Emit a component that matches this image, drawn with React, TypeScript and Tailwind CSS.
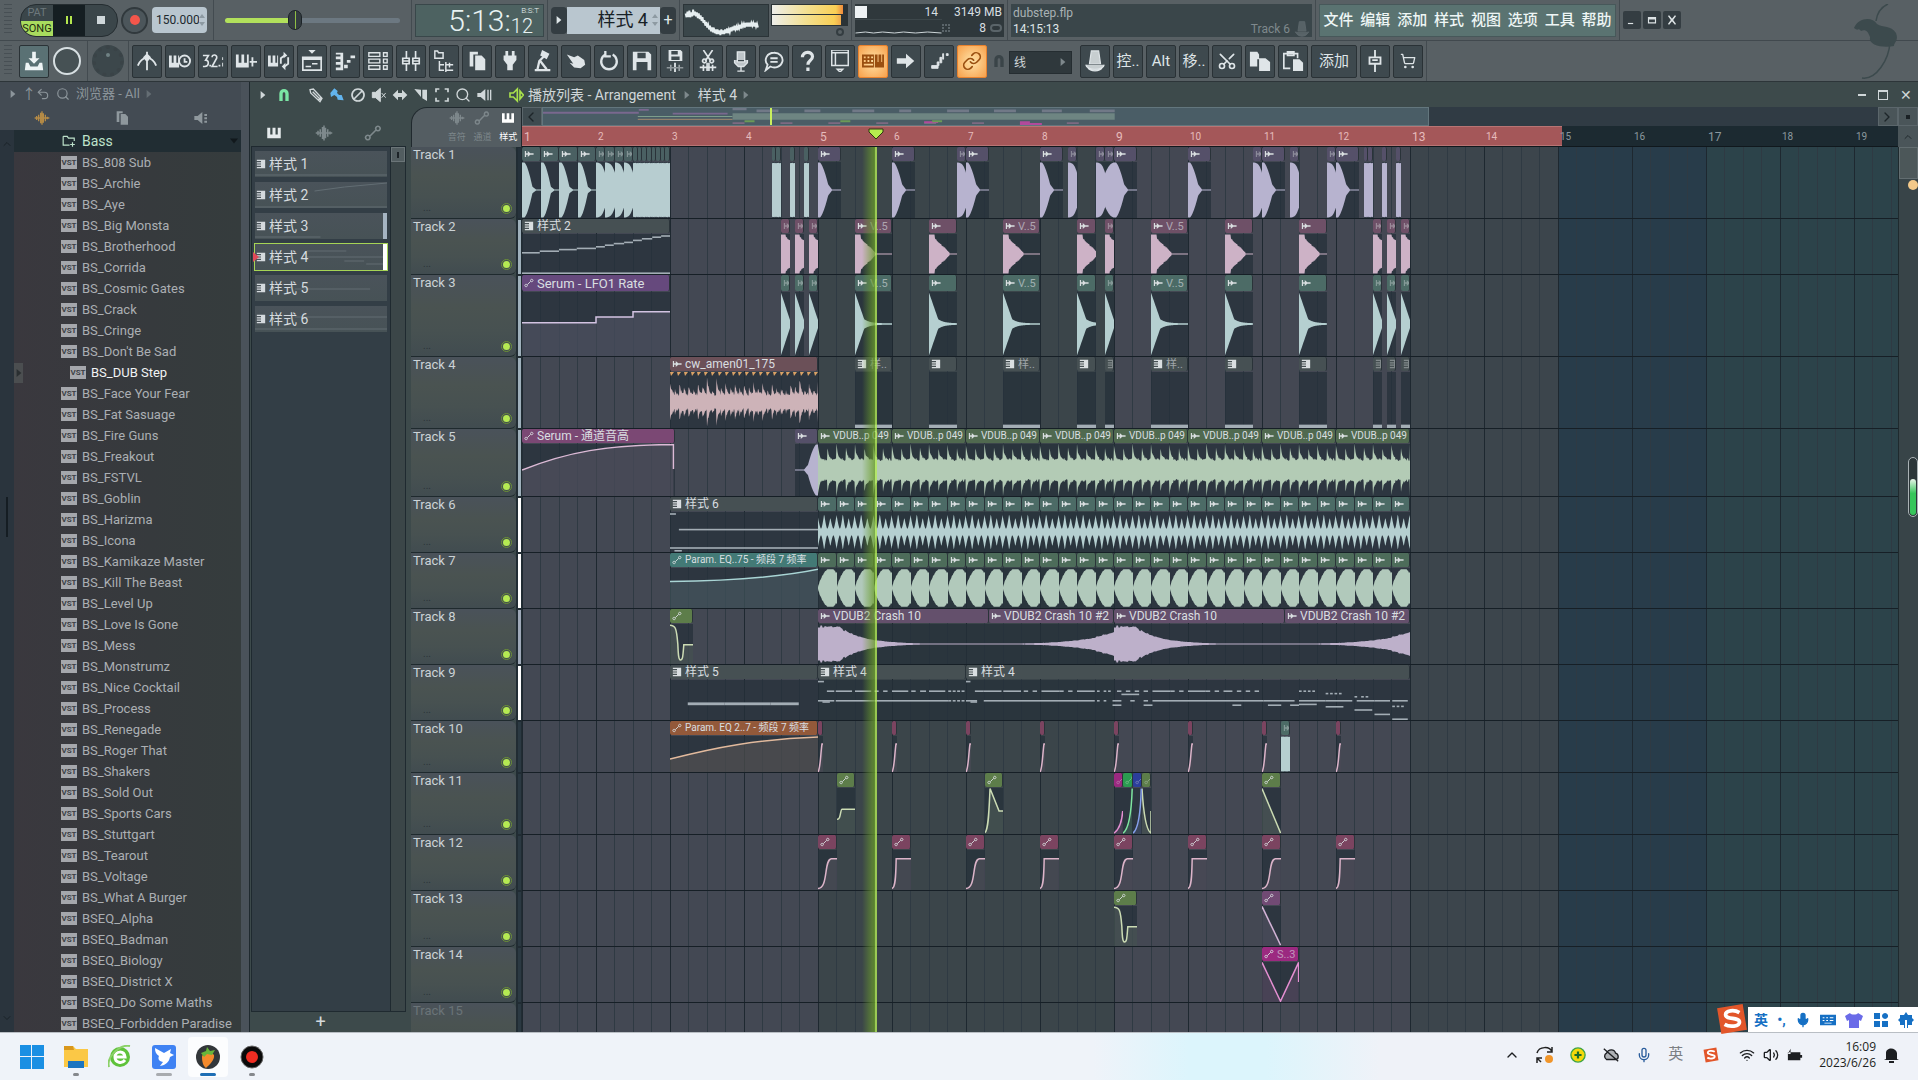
import type { ReactNode } from "react";
import { Search, Undo2, Mic, Wifi, Volume2, ChevronUp, ChevronLeft, ChevronRight, ShoppingCart, Link, Scissors } from "lucide-react";

const BEAT = 18.5;

/* ---------- glyphs ---------- */

const glyphs: Record<string, ReactNode> = {
  piano: <path d="M3 5h4v9h3V5h4v9h3V5h4v14H3z" fill="currentColor" />,
  pattern: <path d="M2 2h20v20H2v-3h10v-3H2v-3h10v-2H2V8h10V5H2z" fill="currentColor" />,
  audio: <path d="M2 5h3v5h4V5l6 5h8v4h-8l-6 5v-5H5v5H2z" fill="currentColor" />,
  auto: <path d="M8 16l8-8M5 15a3 3 0 1 0 .1 0zM18.500 3a3 3 0 1 0 .1 0z" fill="none" stroke="currentColor" strokeWidth="2.200" />,
  wave: <path d="M1 12h22M4 9v6M7 7v10M10 4v16M12 2v20M14 5v14M17 7v10M20 10v4" stroke="currentColor" strokeWidth="2" fill="none" />,
  copy: <path d="M4 2h9v3H8v13H4zM10 6h7l4 4v12H10z" fill="currentColor" />,
  speaker: <path d="M2 9h5l7-6v18l-7-6H2zM17 6h4v3h-4zM17 11h4v3h-4zM17 16h4v3h-4z" fill="currentColor" />,
  live: <path d="M3 9h5l6-6v18l-6-6H3z M18 6l5 6-5 6z" fill="none" stroke="currentColor" strokeWidth="2.500" />,
  render: <path d="M10 2h4v7h4l-6 6-6-6h4zM3 14h3l2 4h8l2-4h3l1 8H2z" fill="currentColor" />,
  metro: <path d="M12 2v20M2 17c2-5 5-8 10-9 5 1 8 4 10 9M9 8l3-3 3 3-3 4z" stroke="currentColor" strokeWidth="2" fill="none" />,
  pianoClock: (
    <>
      <path d="M0 6h3v8h2V6h3v8h2V6h1v13H0z" fill="currentColor" />
      <circle cx="17" cy="12" r="6" fill="none" stroke="currentColor" strokeWidth="2" />
      <path d="M17 9v4h3" stroke="currentColor" strokeWidth="2" fill="none" />
    </>
  ),
  pianoPlus: <path d="M1 5h3v9h3V5h3v9h3V5h2v14H1zM18 8h2v4h4v2h-4v4h-2v-4h-2v-2h2z" fill="currentColor" />,
  pianoLoop: (
    <>
      <path d="M0 6h3v8h2V6h3v8h2V6h1v12H0z" fill="currentColor" />
      <path d="M14 15V9l4-3M22 8v7l-4 3" stroke="currentColor" strokeWidth="2" fill="none" />
      <path d="M17 2l4 4-4 3zM19 14v8l-4-4z" fill="currentColor" />
    </>
  ),
  playlist: (
    <>
      <path d="M8 0h8l-4 4zM1 7h22v4H1z" fill="currentColor" />
      <path d="M2 9v13h20V9M5 18h6M12 15h6" fill="none" stroke="currentColor" strokeWidth="1.800" />
    </>
  ),
  roll: <path d="M2 3h8v19H2v-3h5v-3H2v-3h5v-3H2V7h5V5H2zM11 16h4v4h-4zM14 11h4v3h-4zM18 6h5v3h-5z" fill="currentColor" />,
  rack: <path d="M2 3h12v4H2zM2 10h12v4H2zM2 17h12v4H2zM18 3h4v4h-4zM18 10h4v4h-4zM18 17h4v4h-4z" fill="none" stroke="currentColor" strokeWidth="1.500" />,
  mixer: <path d="M7 1v8M7 15v8M17 1v8M17 15v8M3 9h7v6H3zM14 9h7v6h-7zM3 12h7M14 12h7" fill="none" stroke="currentColor" strokeWidth="1.800" />,
  tree: <path d="M2 1h3l1 2h5v6H2zM7 12v10h5M7 16h5M14 13v6M14 16h8M18 14v5M14 19v5M14 22h8" fill="none" stroke="currentColor" strokeWidth="1.600" />,
  plug: <path d="M7 1h3v5h4V1h3v5h2v5l-4 5v6H9v-6l-4-5V6h2z" fill="currentColor" />,
  lamp: (
    <>
      <path d="M3 22h17M6 21l2-9 6-6M9 12l7 9" fill="none" stroke="currentColor" strokeWidth="2.500" />
      <path d="M11 0l8 4-3 6-7-4z" fill="currentColor" />
    </>
  ),
  hand: <path d="M2 5l8 3 4-2 7 5 1 5-5 4-7-1-5-5 4 1z" fill="currentColor" />,
  undo: <path d="M8 5a8.500 8.500 0 1 0 8 0M8 1v6h6" fill="none" stroke="currentColor" strokeWidth="2.500" />,
  save: <path d="M2 2h17l3 3v17H2zM7 3v6h9V3zM6 13v9h12v-9z" fill="currentColor" fillRule="evenodd" />,
  saveWave: <path d="M5 0h13l2 2v10H5zM8 1v4h7V1zM8 7v4h9V7zM3 19h18v1H3zM7 16h1v7H7zM11 14h2v10h-2zM16 16h1v7h-1z" fill="currentColor" fillRule="evenodd" />,
  cutWave: <path d="M7 0l8 12M17 0L9 12M3 19h18M7 16v7M11 14v9M13 14v9M17 16v7M8 10a2 2 0 1 0 .1 0M16 10a2 2 0 1 0 .1 0" fill="none" stroke="currentColor" strokeWidth="1.800" />,
  mic: <path d="M8 2h8v11H8zM5 11v3l4 4h6l4-4v-3M12 18v5M8 23h8" fill="currentColor" fillOpacity=".8" stroke="currentColor" strokeWidth="1.500" />,
  chat: <path d="M12 3a9 8 0 1 1-4 15l-5 4 2-6A9 8 0 0 1 12 3zM8 9h8M8 13h8" fill="none" stroke="currentColor" strokeWidth="2" />,
  help: <path d="M7 8c0-7 11-7 11-1 0 5-5 4-5 9M13 19v4" fill="none" stroke="currentColor" strokeWidth="3.500" />,
  count: (
    <>
      <path d="M1 6h6l-3 5c4 0 4 7-1 7H1M11 8c0-4 6-3 5 1l-5 9h6" fill="none" stroke="currentColor" strokeWidth="1.800" />
      <path d="M8 16h2v2H8zM18 16h2v2h-2zM22 8h1v3h-1zM22 14h1v4h-1z" fill="currentColor" />
    </>
  ),
  plugin: <path d="M3 0h18v17H3zM3 3h18M7 3v14M9 21h6l-3 3z" fill="none" stroke="currentColor" strokeWidth="1.600" />,
  keys: <path d="M0 5h13v14H0zM2 7v2h2V7zM6 7v2h2V7zM10 7v2h2V7zM2 11v2h2v-2zM6 11v2h2v-2zM10 11v2h2v-2zM2 15v2h10v-2zM14 5h3v8h1V5h3v8h1V5h2v14H14z" fill="currentColor" fillRule="evenodd" />,
  arrow: <path d="M2 9h10V4l9 8-9 8v-5H2z" fill="currentColor" />,
  note: <path d="M4 17h7v3H4zM10 13h2v4h-2zM13 8h2v6h-2zM16 4h1v6h-1zM20 4h2v2h-2z" fill="currentColor" stroke="currentColor" />,
  knobBtn: <path d="M8 1h8l2 14H6zM2 16c0 3 5 5 10 5s10-2 10-5M4 19c3 5 13 5 16 0" fill="currentColor" fillOpacity=".85" stroke="currentColor" strokeWidth="1.300" />,
  paste: (
    <>
      <path d="M9 20H2V4h15v5M6 2h7v4H6z" fill="none" stroke="currentColor" strokeWidth="1.800" />
      <path d="M12 10h7l4 4v9H12z" fill="currentColor" />
    </>
  ),
  pages: <path d="M1 2h8l2 3v5h-2v8H1zM11 9h7l5 4v10H11z" fill="currentColor" />,
  fader: <path d="M12 0v8M12 15v9M6 8h12v7H6zM9 11h6" fill="none" stroke="currentColor" strokeWidth="2" />,
  magnet: <path d="M5 21V10a7 7 0 0 1 14 0v11h-5V10a2 2 0 0 0-4 0v11z" fill="currentColor" />,
  pencil: <path d="M3 4l5-1 13 14-3 5L4 9zM7 7l12 12M16 19l4-4" fill="none" stroke="currentColor" strokeWidth="2" />,
  brush: <path d="M2 9l6-7 5 4-1 3 3 3h4l3 8-9-1-1-4-4-3-5 3z" fill="currentColor" />,
  ban: <path d="M12 3a9 9 0 1 0 .1 0zM6 18L18 6" fill="none" stroke="currentColor" strokeWidth="2.500" />,
  mute: <path d="M2 8h5l7-6v20l-7-6H2zM16 9l6 7M22 9l-6 7" fill="currentColor" stroke="currentColor" strokeWidth="1.500" />,
  slip: <path d="M1 12l8-8v5h6V4l8 8-8 8v-5H9v5z" fill="currentColor" />,
  slice: <path d="M2 3l10 1v11zM14 4h7v17l-7-4z" fill="currentColor" />,
  select: <path d="M3 8V3h5M16 3h5v5M21 16v5h-5M8 21H3v-5" fill="none" stroke="currentColor" strokeWidth="2.500" />,
  play: <path d="M2 9h5l7-6v18l-7-6H2zM17 4h2v16h-2zM21 4h2v16h-2z" fill="currentColor" />,
  folder: <path d="M2 4h7l2 3h10v5M2 4v15h11M18 14v8M14 18h8" fill="none" stroke="currentColor" strokeWidth="2" />,
};

function Glyph({ name, className = "size-5" }: { name: string; className?: string }) {
  return (
    <svg viewBox="0 0 24 24" aria-hidden="true" className={`shrink-0 ${className}`}>
      {glyphs[name]}
    </svg>
  );
}

const Caret = ({ className = "" }: { className?: string }) => (
  <svg viewBox="0 0 6 10" aria-hidden="true" className={`h-2 w-1.5 shrink-0 fill-current ${className}`}>
    <path d="M0 0l6 5-6 5z" />
  </svg>
);

const Spinner = () => (
  <svg viewBox="0 0 6 14" aria-hidden="true" className="h-3.5 w-1.5 shrink-0 fill-[#8d9aa2]">
    <path d="M0 5l3-4 3 4zM0 9l3 4 3-4z" />
  </svg>
);

/* ---------- top bars ---------- */

const Grip = () => <div className="h-8 w-2 shrink-0 bg-[repeating-linear-gradient(#474f54_0_1px,transparent_1px_4px)]" />;
const Rule = () => <div className="w-px shrink-0 self-stretch bg-[#434b50]" />;

function Transport() {
  return (
    <div className="flex h-[41px] items-center gap-[3px] border-b border-[#41494e] pl-1">
      <div className="flex w-[206px] shrink-0 items-center">
        <Grip />
        <div className="ml-2 flex h-[33px] w-[98px] shrink-0 overflow-hidden rounded-2xl border border-[#252d31] bg-[#3b464a]">
          <button className="flex w-8 flex-col text-center text-[11px] leading-4">
            <span className="h-4 text-[#6d787c]">PAT</span>
            <span className="h-4 rounded-bl-xl bg-[#a9dc5e] text-[#1d2a10]">SONG</span>
          </button>
          <button aria-label="暂停" className="flex w-8 items-center justify-center gap-0.5 bg-[#151e22]">
            <span className="h-2 w-0.5 bg-[#b4e64f]" />
            <span className="h-2 w-0.5 bg-[#b4e64f]" />
          </button>
          <button aria-label="停止" className="flex flex-1 items-center justify-center">
            <span className="size-2 bg-[#cfd7da]" />
          </button>
        </div>
        <button aria-label="录音" className="ml-[3px] flex size-[27px] shrink-0 items-center justify-center rounded-full border-2 border-[#31393d] bg-[#4c565b]">
          <span className="size-2.5 rounded-full bg-[#f4564b]" />
        </button>
        <label className="ml-1 flex h-[26px] w-[55px] shrink-0 items-center rounded bg-[#b9c6cf] pl-1 pr-0.5">
          <input aria-label="速度" defaultValue="150.000" className="min-w-0 flex-1 bg-transparent text-xs text-[#20292e] outline-none" />
          <Spinner />
        </label>
      </div>
      <Rule />
      <div className="flex w-[191px] shrink-0 items-center px-2">
        <input
          type="range"
          aria-label="主音量"
          defaultValue={39}
          className="h-[5px] w-full appearance-none rounded bg-[linear-gradient(90deg,#b2e15c_0_39%,#6c7881_39%)] [&::-webkit-slider-thumb]:h-5 [&::-webkit-slider-thumb]:w-3.5 [&::-webkit-slider-thumb]:appearance-none [&::-webkit-slider-thumb]:rounded-full [&::-webkit-slider-thumb]:border [&::-webkit-slider-thumb]:border-[#1c2327] [&::-webkit-slider-thumb]:bg-[linear-gradient(90deg,#333c40_0_6px,#8fbf45_6px_7px,#333c40_7px)]"
        />
      </div>
      <Rule />
      <div className="flex h-[33px] w-[129px] shrink-0 justify-end border border-[#39474a] bg-[#4d6261] pr-1 font-light text-[#e8f2f2]">
        <span className="text-[30px] leading-8">5:13:</span>
        <div className="flex flex-col items-end">
          <span className="text-[8px] leading-3">B:S:T</span>
          <span className="pr-1.5 text-xl leading-[18px]">12</span>
        </div>
      </div>
      <Rule />
      <div className="flex h-[27px] w-[125px] shrink-0 text-[#dfe6e8]">
        <button aria-label="上一个" className="flex w-4 items-center justify-center rounded bg-[#343d42]"><Caret /></button>
        <button className="flex flex-1 items-center justify-end gap-1 bg-[#b9c6cf] pr-0.5 text-lg leading-7 text-[#182126]">
          样式 4 <Spinner />
        </button>
        <button aria-label="新样式" className="w-4 rounded bg-[#343d42] text-base leading-6">+</button>
      </div>
      <Rule />
      <div className="flex h-[33px] w-[165px] shrink-0 gap-0.5">
        <svg viewBox="0 0 86 33" className="w-[86px] border border-[#2b3438] bg-[#3a464a]">
          <path
            d="M0 9l1 4 1-6 1 6 1-7 1 7 1-5 1 4 1-7 1 6 1-4 1 5 1-4 1 6 1-5 1 6 1-4 1 6 1-4 1 6 1-3 1 6 1-4 1 6 1-3 1 5 1-4 1 6 1-4 1 5 1-5 1 6 1-4 1 5 1-5 1 5 1-4 1 5 1-6 1 5 1-4 1 4 1-5 1 4 1-5 1 5 1-4 1 3 1-5 1 4 1-5 1 4 1-5 1 4 1-3 1 4 1-5 1 3 1-4 1 4 1-5 1 3 1-3 1 4 1-5 1 4 1-4 1 4 1-4 1 4 1-4 1 3 1-3 1 4 1-4 1 4 1-3 1 4"
            fill="none"
            stroke="#e6eef0"
            strokeWidth="2"
          />
        </svg>
        <div className="flex flex-1 flex-col">
          <div className="flex h-[22px] flex-col gap-px bg-[#2b3336] p-px">
            <div className="h-2.5 w-[95%] bg-[linear-gradient(90deg,#eeeeea,#f3df8f_50%,#f9cf55_90%,#f08a3c)]" />
            <div className="h-2.5 w-[92%] bg-[linear-gradient(90deg,#eeeeea,#f3df8f_50%,#f9cf55_90%,#f0a84c)]" />
          </div>
          <span className="mr-1 mt-0.5 size-2 self-end rounded-full border-2 border-[#343d41]" />
        </div>
      </div>
      <Rule />
      <div className="grid h-[33px] w-[149px] shrink-0 grid-cols-[1fr_62px] grid-rows-2 bg-[#2f383c] text-right text-xs leading-4 text-[#d8dfe2]">
        <div className="flex justify-between border-b border-[#3d474b] pr-1">
          <span className="mt-0.5 size-3 bg-[#eef2f4]" />14
        </div>
        <div className="pr-0.5">3149 MB</div>
        <svg viewBox="0 0 86 16" className="h-4 w-full"><path d="M0 13l10-1 8 1 9-1 12 1 9-1 12 1 12-1 14 1" fill="none" stroke="#cdd5d8" /></svg>
        <div className="flex items-center justify-end gap-1 pr-0.5">
          <span className="mr-auto size-2 border-2 border-dotted border-[#5a6469]" />8 <span className="h-2 w-3 rounded-full border-2 border-[#5a6469]" />
        </div>
      </div>
      <Rule />
      <div className="flex h-[33px] w-[301px] shrink-0 items-end justify-between bg-[#3a464a] px-0.5 text-xs leading-4 text-[#a9b2b5]">
        <div>
          <div>dubstep.flp</div>
          <div className="text-[#dfe5e7]">14:15:13</div>
        </div>
        <div className="flex items-center gap-1 text-[#7f898d]">Track 6 <Glyph name="knobBtn" className="size-4 opacity-50" /></div>
      </div>
      <Rule />
      <nav className="flex h-[33px] w-[297px] shrink-0 items-center justify-around border border-[#47585a] bg-[#5a7371] text-[15px] font-medium text-[#eef6f5]">
        {["文件", "编辑", "添加", "样式", "视图", "选项", "工具", "帮助"].map((m) => (
          <button key={m}>{m}</button>
        ))}
      </nav>
      <Rule />
      <div className="flex gap-0.5 text-[#dde3e5]">
        {["M5 17h9v2H5z", "M5 7h14v11H5zM7 11v5h10v-5z", "M5 5l2-1 5 6 5-6 2 1-5 7 5 7-2 1-5-6-5 6-2-1 5-7z"].map((d) => (
          <button key={d} aria-label="窗口" className="flex size-[18px] items-center justify-center rounded-xs bg-[#343d42]">
            <svg viewBox="0 0 24 24" className="size-3.5 fill-current"><path d={d} fillRule="evenodd" /></svg>
          </button>
        ))}
      </div>
    </div>
  );
}

function Tool({ name, text, hot, wide }: { name?: string; text?: string; hot?: boolean; wide?: boolean }) {
  return (
    <button
      aria-label={text ?? name}
      className={`flex h-[33px] shrink-0 items-center justify-center whitespace-nowrap rounded-xs border text-[15px] ${wide ? "w-[46px]" : "w-[30px]"} ${
        hot ? "border-[#e8822e] bg-[radial-gradient(#ffe3a8,#f7a04a)] text-[#9a4f10]" : "border-[#2a3236] bg-[#3e494e] text-[#dfe5e8]"
      }`}
    >
      {name === "cut" ? (
        <Scissors className="size-5 -rotate-90" />
      ) : name === "link" ? (
        <Link className="size-5" />
      ) : name === "cart" ? (
        <ShoppingCart className="size-4" />
      ) : name ? (
        <Glyph name={name} className="size-[22px]" />
      ) : (
        text
      )}
    </button>
  );
}

const mainTools = [
  "metro", "pianoClock", "count", "pianoPlus", "pianoLoop", "playlist", "roll", "rack", "mixer", "tree", "copy", "plug", "lamp",
  "hand", "undo", "save", "saveWave", "cutWave", "mic", "chat", "help", "plugin", "keys", "arrow", "note", "link",
];

function Tools() {
  return (
    <div className="flex h-[41px] items-center border-b border-[#2d3539] pl-1">
      <Grip />
      <div className="ml-[7px] flex w-[68px] items-center gap-1">
        <button aria-label="渲染" className="flex h-[33px] w-[30px] items-center justify-center rounded-xs border border-[#2a3236] bg-[#5a7174] text-[#eef4f5]">
          <Glyph name="render" className="size-[22px]" />
        </button>
        <span className="size-[28px] rounded-full border-2 border-[#d7dfe2] bg-[#465154]" />
      </div>
      <Rule />
      <div className="flex w-10 justify-center">
        <span className="flex size-8 justify-center rounded-full border-4 border-dotted border-[#3a4347] bg-[#3c474b] pt-1"><i className="size-1 rounded-full bg-[#6f8184]" /></span>
      </div>
      <Rule />
      <div className="ml-[3px] flex gap-[3px]">
        {mainTools.map((m) => (
          <Tool key={m} name={m} hot={m === "keys" || m === "link"} />
        ))}
      </div>
      <Glyph name="magnet" className="ml-1 size-4 text-[#3a4448]" />
      <div className="relative ml-0.5 h-[23px] w-[63px] shrink-0">
        <select aria-label="吸附" className="size-full appearance-none border border-[#252d31] bg-[#2f383c] pl-1 text-xs text-[#cfd6d9]">
          <option>线</option>
        </select>
        <Caret className="pointer-events-none absolute right-1.5 top-2 text-[#7e888c]" />
      </div>
      <div className="ml-2 flex gap-[3px]">
        <Tool name="knobBtn" />
        <Tool text="控.." />
        <Tool text="Alt" />
        <Tool text="移.." />
        <Tool name="cut" />
        <Tool name="pages" />
        <Tool name="paste" />
        <Tool text="添加" wide />
        <Tool name="fader" />
        <Tool name="cart" />
      </div>
      <div className="ml-[3px] w-px self-stretch bg-[#434b50]" />
    </div>
  );
}

function TopBars() {
  return (
    <header className="relative shrink-0 bg-[#586064]">
      <Transport />
      <Tools />
      <svg viewBox="0 0 50 76" className="absolute right-4 top-1 h-[76px] w-[50px]">
        <path d="M2 24c4-10 18-12 23-4 6 4 14 1 19 9 3 8-2 9-2 13-10 2-26 0-24-9-2-5-4-8-9-6-4-4-2 1-7-3z" fill="#3c4a4d" />
        <path d="M24 17c1-7 5-14 12-17M38 38c-1 18-14 38-28 36" fill="none" stroke="#3c4a4d" strokeWidth="1.500" />
      </svg>
    </header>
  );
}

/* ---------- browser ---------- */

const presets = [
  "BS_808 Sub", "BS_Archie", "BS_Aye", "BS_Big Monsta", "BS_Brotherhood", "BS_Corrida", "BS_Cosmic Gates", "BS_Crack",
  "BS_Cringe", "BS_Don't Be Sad", "BS_DUB Step", "BS_Face Your Fear", "BS_Fat Sasuage", "BS_Fire Guns", "BS_Freakout",
  "BS_FSTVL", "BS_Goblin", "BS_Harizma", "BS_Icona", "BS_Kamikaze Master", "BS_Kill The Beast", "BS_Level Up",
  "BS_Love Is Gone", "BS_Mess", "BS_Monstrumz", "BS_Nice Cocktail", "BS_Process", "BS_Renegade", "BS_Roger That",
  "BS_Shakers", "BS_Sold Out", "BS_Sports Cars", "BS_Stuttgart", "BS_Tearout", "BS_Voltage", "BS_What A Burger",
  "BSEQ_Alpha", "BSEQ_Badman", "BSEQ_Biology", "BSEQ_District X", "BSEQ_Do Some Maths", "BSEQ_Forbidden Paradise",
];

function Browser() {
  return (
    <aside className="flex w-[241px] shrink-0 flex-col bg-[#434b53]">
      <div className="flex h-6 items-center gap-1.5 pl-2.5 text-[13px] text-[#8c959b]">
        <Caret />
        <span className="w-2 text-sm">↑</span>
        <Undo2 className="size-3.5" />
        <Search className="size-3.5" />
        <span>浏览器 - All</span>
        <Caret className="text-[#646d73]" />
      </div>
      <div className="flex h-6 items-center justify-between pl-[34px] pr-8">
        <button aria-label="声音" className="text-[#b58b46]"><Glyph name="wave" className="size-4" /></button>
        <button aria-label="文件" className="text-[#8f989d]"><Glyph name="copy" className="size-4" /></button>
        <button aria-label="插件" className="text-[#8f989d]"><Glyph name="speaker" className="size-4" /></button>
      </div>
      <div className="flex min-h-0 flex-1">
        <div className="flex w-3.5 flex-col items-center justify-between bg-[#2a343d] py-2 text-[#1a2228]">
          <ChevronUp className="size-3" />
          <span className="-mt-32 h-10 w-0.5 bg-[#151d23]" />
          <ChevronUp className="size-3 rotate-180" />
        </div>
        <div className="min-w-0 flex-1 overflow-hidden bg-[linear-gradient(90deg,#3a383e,#363a3d_60%,#353c3d)]">
          <div className="flex h-[22px] items-center gap-1.5 bg-[#212d33] pl-12 pr-1 text-sm text-[#bfe3cc]">
            <Glyph name="folder" className="size-3.5" />
            <span className="flex-1">Bass</span>
            <Caret className="rotate-90 text-[#11181c]" />
          </div>
          <ul>
            {presets.map((p) => {
              const on = p === "BS_DUB Step";
              return (
                <li key={p} className="flex h-[21px] items-center">
                  {on && <span className="flex h-5 w-[9px] items-center justify-center bg-[#4b4e50] text-[#2a2f31]"><Caret /></span>}
                  <button className={`flex items-center gap-[5px] whitespace-nowrap pl-[47px] text-[13px] leading-5 ${on ? "text-[#f1f3f4]" : "text-[#abafb3]"}`}>
                    <span className="w-4 bg-[#a5a7ac] text-center text-[8px] font-bold leading-[13px] text-[#3c3f45]">VST</span>
                    {p}
                  </button>
                </li>
              );
            })}
          </ul>
        </div>
      </div>
    </aside>
  );
}

/* ---------- pattern picker ---------- */

function Picker() {
  const hints = ["M0 24H133", "M0 25H133M60 9L90 5 133 1", "M0 24H66", "M52 7h40M50 13h83M90 17h20M112 20h21", "M40 14H116", "M40 11H133M0 23H133"];
  return (
    <div className="flex w-[156px] shrink-0 flex-col pl-px">
      <div className="flex h-[39px] items-center justify-between pl-3.5 pr-6 pt-3">
        <button aria-label="样式" className="text-[#e5eaec]"><Glyph name="piano" className="size-[18px]" /></button>
        <button aria-label="音频" className="text-[#7e898c]"><Glyph name="wave" className="size-[18px]" /></button>
        <button aria-label="自动" className="text-[#7e898c]"><Glyph name="auto" className="size-[18px]" /></button>
      </div>
      <div className="flex min-h-0 flex-1 border border-[#1f2a30] bg-[#333e46]">
        <ul className="flex flex-1 flex-col gap-[5px] px-[3px] pt-1">
          {hints.map((d, i) => {
            const on = i === 3;
            return (
              <li key={i} className={`relative h-[26px] bg-[linear-gradient(#4a535a,#475256)] ${on ? "outline outline-[#a6d455]" : ""}`}>
                <svg viewBox="0 0 133 26" preserveAspectRatio="none" className="absolute inset-0 size-full stroke-[#626d73]"><path d={d} fill="none" /></svg>
                <button className="relative flex h-full items-center gap-[3px] pl-px text-sm text-[#d5dade]">
                  <Glyph name="pattern" className="size-2.5" />样式 {i + 1}
                </button>
                {on && <Caret className="absolute -left-0.5 top-[7px] h-3 text-[#e04858]" />}
                {(i === 2 || on) && <span className={`absolute inset-y-0 right-0 w-1 ${on ? "bg-white" : "bg-[#a5b4c2]"}`} />}
              </li>
            );
          })}
        </ul>
        <div className="w-[15px] border-l border-[#1f2a30] bg-[#3b4648]">
          <div className="flex h-[15px] items-center justify-center border border-[#6b7578] bg-[#525d60]"><i className="h-1.5 w-0.5 bg-[#1c2327]" /></div>
        </div>
      </div>
      <button aria-label="添加样式" className="h-5 pr-4 text-lg leading-[18px] text-[#d4dadc]">+</button>
    </div>
  );
}

/* ---------- clips ---------- */

const tones: Record<string, { head: string; ink: string }> = {
  teal: { head: "bg-[#4a6062]", ink: "#b7cdd0" },
  mint: { head: "bg-[#4c6b66]", ink: "#b5cfd0" },
  lav: { head: "bg-[#555069]", ink: "#b7b3cf" },
  pink: { head: "bg-[#6e5067]", ink: "#cdb2c6" },
  gray: { head: "bg-[#465053]", ink: "#a3adb5" },
  purple: { head: "bg-[#66497d]", ink: "#d3c3e2" },
  plum: { head: "bg-[#7b4874]", ink: "#dcbad6" },
  brown: { head: "bg-[#6b5058]", ink: "#cdb3b8" },
  green: { head: "bg-[#50694f]", ink: "#b3cbb5" },
  moss: { head: "bg-[#4d6c5a]", ink: "#b1c9bb" },
  cyan: { head: "bg-[#437a76]", ink: "#a9d5d5" },
  olive: { head: "bg-[#5d7d4a]", ink: "#ccdcb4" },
  crash: { head: "bg-[#64506c]", ink: "#bdb0ca" },
  orange: { head: "bg-[#93593a]", ink: "#e2ba9d" },
  rose: { head: "bg-[#7b4460]", ink: "#dcb4c9" },
  magenta: { head: "bg-[#9c2a80]", ink: "#e58fd2" },
  lime: { head: "bg-[#2c9c50]", ink: "#7fe6a0" },
  blue: { head: "bg-[#2c3f9c]", ink: "#86a0ec" },
  violet: { head: "bg-[#714a74]", ink: "#d3b3d6" },
};

type Clip = {
  at: number;
  len: number;
  kind: "audio" | "auto" | "pattern";
  tone: string;
  label?: string;
  shape: string;
};

// cheap repeatable noise for the waveform edges
const noise = (n: number) => {
  const v = Math.sin(n * 12.9898) * 43758.5453;
  return v - Math.floor(v);
};

// height of the waveform (0..1) at a given beat inside the clip
const envelopes: Record<string, (b: number, len: number) => number> = {
  kick: (b) => (b < 0.15 ? 1 : b < 0.55 ? 0.12 + 0.86 * (1 - ((b - 0.15) / 0.41) ** 1.5) : b < 0.8 ? 0.5 * (0.8 - b) : 0.01),
  thump: (b) => (b < 0.1 ? 1 : b < 0.55 ? 0.2 + 0.8 * (1 - ((b - 0.1) / 0.45) ** 1.5) : b < 0.78 ? 0.87 * (0.78 - b) : 0.01),
  thumpRev: (b, len) => envelopes.thump(len - b, len),
  tom: (b) => 1 - 0.4 * (b / 0.5) ** 3,
  tomRev: (b) => 1 - 0.4 * ((0.5 - b) / 0.5) ** 2,
  full: (b) => 0.97 + 0.03 * noise(b * 9),
  snare: (b) => (b < 0.3 ? 1 : Math.max(0.01, (0.75 * (1.15 - b)) / 0.85 + (b < 1.1 ? 0.08 * noise(b * 5) : 0))),
  shortSnare: (b) => (b < 0.25 ? 1 : b < 0.35 ? 0.85 : 0.9 - b * 0.4),
  stab: (b) => (b < 0.5 ? 1 - b * 1.7 : 0.02 + 0.13 * Math.exp(-(b - 0.5) * 3)),
  shortStab: (b) => 1 - 1.8 * b,
  amen: (b) => {
    const hit = Math.floor(b * 4);
    return 0.2 + 0.14 * noise(b * 7) + (0.25 + 0.5 * noise(hit + 3)) * Math.exp(-((b * 4) % 1) * 2.5) * (hit % 2 ? 0.5 : 1);
  },
  loop: (b) => 0.34 + 0.12 * noise(b * 11) + 0.6 * Math.exp(-(b % 1) * 12) + 0.5 * Math.exp(-((b + 0.5) % 1) * 10),
  hats: (b) => {
    const f = (b * 3) % 1;
    return 0.16 + 0.8 * Math.abs(2 * f - 1) ** 1.5 * (0.72 + 0.28 * noise(Math.round(b * 3)));
  },
  blob: (b) => Math.min(0.96, 0.05 + 0.95 * Math.sin(Math.min(1, b * 1.02) * 2.35) ** 0.9 + 0.06 * noise(b * 13)),
  crash: (b) => Math.max(0.01, Math.min(0.95, Math.exp(-(b - 1) / 1.35)) * (0.88 + 0.12 * noise(Math.floor(b * 9)))),
  crashRev: (b, len) => Math.max(0.01, 0.7 * Math.exp((b - len) / 1.6) * (0.84 + 0.16 * noise(Math.floor(b * 9)))),
};

// automation curves in a 100 x 100 box
const curves: Record<string, string> = {
  lfo: "M0 48H50V39H75V31H100",
  pitch: "M0 50C30 15 55 2 99 1V48",
  eqUp: "M0 34C40 32 75 22 100 3",
  eqDown: "M0 64C30 32 60 8 100 3",
  dip: "M0 3C22 3 28 8 34 50 36 80 38 90 45 90 56 90 56 80 60 52H100",
  tick: "M0 100C50 90 50 50 80 22H100",
  step: "M0 68C22 70 18 46 28 46H100",
  peak: "M0 97C20 90 22 50 28 1L78 50H100",
  fall: "M0 1L98 98",
  rise: "M0 98C45 92 85 80 97 50",
  riseTall: "M0 98C55 90 85 50 92 1",
  cliff: "M0 1C15 50 45 92 100 98V50",
  ess: "M0 96C55 96 30 24 70 22L100 22",
  jump: "M0 96C20 94 20 60 22 22H100",
  vee: "M0 1L50 98 99 1V50",
};

// notes as x, y, width in a 100 x 100 box
const notes: Record<string, number[][]> = {
  scale: [[0, 45, 12], [12, 41, 13], [25, 37, 12], [37, 34, 13], [50, 30, 6], [56, 26, 6], [62, 22, 7], [69, 19, 6], [75, 14, 6], [81, 10, 7], [88, 6, 6], [94, 3, 6], [0, 96, 100]],
  block: [[0, 94, 100]],
  two: [[0, 3, 4], [6, 42, 94], [0, 88, 100], [3, 95, 5]],
  five: [[12, 56, 25], [37, 56, 31], [68, 56, 19]],
  bars: [[0, 2, 4], [6, 26, 5], [12, 26, 11], [25, 26, 11], [38, 26, 3], [44, 26, 3], [50, 26, 11], [63, 26, 3], [69, 26, 4], [75, 26, 11], [88, 26, 2], [91, 26, 2], [94, 26, 2], [97, 26, 2], [0, 50, 11], [12, 50, 76], [88, 50, 2], [91, 50, 2], [94, 50, 2], [97, 50, 2], [3, 53, 5]],
  long: [
    [0, 2, 1], [2, 26, 2], [4, 26, 4], [8.4, 26, 4], [13, 26, 1], [15, 26, 1], [17, 26, 4], [21, 26, 1], [23, 26, 1], [25, 26, 4], [29.5, 26, 0.6], [31, 26, 0.6], [32, 26, 0.6],
    [34, 26, 1], [36, 26, 1], [38, 26, 1], [40, 26, 1], [42, 26, 4], [46, 26, 1], [48, 26, 1], [50, 26, 4], [54, 26, 1], [56, 26, 1], [58, 26, 2], [61, 26, 1], [63, 26, 1], [65, 26, 1],
    [0, 50, 2.5], [4, 50, 25], [29.5, 50, 0.6], [31, 50, 0.6], [33, 50, 2], [37, 50, 1], [40, 50, 1], [42, 50, 25], [67, 50, 7], [75, 50, 6], [81, 50, 6], [88, 50, 4], [92, 50, 3.5], [96, 50, 3.5],
    [1, 53, 1.5], [33, 61, 2], [40, 61, 2], [35, 34, 4], [60, 61, 2], [68, 61, 3], [73, 61, 2], [75, 59, 4],
    [75, 26, 0.6], [76, 26, 0.6], [77, 26, 0.6], [78, 26, 0.6], [81, 32, 0.6], [82, 32, 0.6], [83, 32, 0.6], [84, 32, 0.6], [81, 65, 4], [87.5, 40, 0.6], [89, 40, 0.6], [90, 40, 0.6], [87.5, 73, 4],
    [92, 84, 3.5], [96, 64, 0.6], [97, 64, 0.6], [98, 64, 0.6], [96, 96, 3.5],
  ],
};

function wavePath(shape: string, len: number) {
  const w = Math.round(len * BEAT);
  const env = envelopes[shape];
  const hs = Array.from({ length: w * 2 + 1 }, (_, i) => Math.max(1, 49 * env(i / 2 / BEAT, len)));
  const up = hs.map((h, i) => `${i / 2} ${(50 - h).toFixed(1)}`);
  const down = hs.map((h, i) => `${i / 2} ${(50 + h).toFixed(1)}`).reverse();
  return `M${up.join("L")}L${down.join("L")}Z`;
}

function ClipBody({ clip }: { clip: Clip }) {
  const { ink } = tones[clip.tone];
  if (clip.kind === "audio") {
    return (
      <svg viewBox={`0 0 ${Math.round(clip.len * BEAT)} 100`} preserveAspectRatio="none" className="absolute inset-0 size-full">
        <path d={wavePath(clip.shape, clip.len)} fill={ink} />
      </svg>
    );
  }
  return (
    <svg viewBox="0 0 100 100" preserveAspectRatio="none" className="absolute inset-0 size-full">
      {clip.kind === "pattern" ? (
        notes[clip.shape].map(([x, y, w], i) => <rect key={i} x={x} y={y} width={w} height={clip.shape === "five" || clip.shape === "block" ? 7 : 4} fill={ink} />)
      ) : (
        <>
          <path d={`${curves[clip.shape]}V100H0Z`} fill={ink} fillOpacity=".15" />
          <path d={curves[clip.shape]} fill="none" stroke={ink} strokeWidth="1.500" vectorEffect="non-scaling-stroke" />
        </>
      )}
    </svg>
  );
}

function ClipView({ clip, tall }: { clip: Clip; tall: boolean }) {
  const left = Math.round(clip.at * BEAT);
  const width = Math.round((clip.at + clip.len) * BEAT) - left;
  const faded = clip.len < 1;
  const size = tall ? "h-4 text-[13px]" : clip.len === 4 || clip.label?.startsWith("Param") ? "h-3.5 text-[10px]" : "h-3.5 text-xs";
  return (
    <div className="absolute inset-y-0 flex flex-col overflow-hidden" style={{ left, width }}>
      <div className={`flex shrink-0 items-center gap-[3px] overflow-hidden whitespace-nowrap rounded-xs border-r border-[#2a3339] pl-0.5 leading-none text-[#d9dee0] ${size} ${tones[clip.tone].head}`}>
        {clip.len >= 0.5 && <Glyph name={clip.kind} className={`size-2.5 ${faded ? "opacity-40" : ""}`} />}
        {clip.label && <span className={clip.len < 3 ? "text-[11px] opacity-60" : ""}>{clip.label}</span>}
      </div>
      <div className="relative mt-px flex-1 bg-[#26303a]/75">
        {clip.shape === "amen" && (
          <div className="absolute inset-x-0 top-0 flex justify-between">
            {Array.from({ length: 22 }, (_, i) => (
              <svg key={i} viewBox="0 0 4 4" className="size-1 fill-[#dba265]"><path d="M0 0h4L1 4z" /></svg>
            ))}
          </div>
        )}
        <div className={`absolute inset-x-0 bottom-0 ${clip.shape === "amen" ? "top-1" : "top-0"}`}>
          <ClipBody clip={clip} />
        </div>
      </div>
    </div>
  );
}

const audio = (tone: string, shape: string, spots: number[][], label?: string): Clip[] =>
  spots.map(([at, len]) => ({ at, len, kind: "audio", tone, shape, label: len === 2 || len >= 4 ? label : undefined }));
const auto = (at: number, len: number, tone: string, shape: string, label?: string): Clip => ({ at, len, kind: "auto", tone, shape, label });
const pattern = (at: number, len: number, shape: string, label?: string): Clip => ({ at, len, kind: "pattern", tone: "gray", shape, label });
const every = (from: number, step: number, count: number, len: number) => Array.from({ length: count }, (_, i) => [from + i * step, len]);

const hits = [[18, 2], [22, 1.5], [26, 2], [30, 1], [34, 2], [38, 1.5], [42, 1.5]];
const rolls = [[14, 0.5], [14.75, 0.5], [15.5, 0.5], [31.5, 0.5], [46, 0.5], [46.75, 0.5], [47.5, 0.5]];

type Row = { h: string; strip: string; clips: Clip[] };

const rows: Row[] = [
  {
    h: "h-[72px]",
    strip: "bg-[#25313a]",
    clips: [
      ...audio("teal", "kick", every(0, 1, 4, 1)),
      ...audio("teal", "tom", every(4, 0.5, 4, 0.5)),
      ...audio("teal", "full", every(6, 0.25, 8, 0.25)),
      ...audio("teal", "full", [[13.5, 0.25], [13.75, 0.25], [14.5, 0.25], [15.25, 0.25]]),
      ...audio("lav", "thump", every(16, 4, 8, 1.25)),
      ...audio("lav", "tom", [[23.5, 0.5], [29.5, 0.5], [31, 0.5], [39.5, 0.5], [41.5, 0.5], [43.5, 0.5]]),
      ...audio("lav", "tomRev", [[31.5, 0.5]]),
      ...audio("lav", "full", [[45.5, 0.25], [45.75, 0.25], [46.5, 0.25], [47.25, 0.25]]),
    ],
  },
  { h: "h-14", strip: "bg-[#9fb0bb]", clips: [pattern(0, 8, "scale", "样式 2"), ...audio("pink", "snare", hits, "V..5"), ...audio("pink", "shortSnare", rolls)] },
  { h: "h-[82px]", strip: "bg-[#9fb0bb]", clips: [auto(0, 8, "purple", "lfo", "Serum - LFO1 Rate"), ...audio("mint", "stab", hits, "V..5"), ...audio("mint", "shortStab", rolls)] },
  {
    h: "h-[72px]",
    strip: "bg-[#9fb0bb]",
    clips: [
      ...audio("brown", "amen", [[8, 8]], "cw_amen01_175"),
      ...[...hits, ...rolls.slice(3)].map(([at, len]) => pattern(at, len, "block", len === 2 ? "样.." : undefined)),
    ],
  },
  {
    h: "h-[68px]",
    strip: "bg-[#9fb0bb]",
    clips: [auto(0, 8.25, "plum", "pitch", "Serum - 通道音高"), ...audio("lav", "thumpRev", [[14.75, 1.25]]), ...audio("green", "loop", every(16, 4, 8, 4), "VDUB..p 049")],
  },
  { h: "h-14", strip: "bg-white", clips: [pattern(8, 8, "two", "样式 6"), ...audio("mint", "hats", every(16, 1, 32, 1))] },
  { h: "h-14", strip: "bg-white", clips: [auto(8, 8, "cyan", "eqUp", "Param. EQ..75 - 频段 7 频率"), ...audio("moss", "blob", every(16, 1, 32, 1))] },
  {
    h: "h-14",
    strip: "bg-[#9fa9b8]",
    clips: [
      auto(8, 1.25, "olive", "dip"),
      ...audio("crash", "crash", [[16, 9.25], [32, 9.25]], "VDUB2 Crash 10"),
      ...audio("crash", "crashRev", [[25.25, 6.75], [41.25, 6.75]], "VDUB2 Crash 10 #2"),
    ],
  },
  { h: "h-14", strip: "bg-white", clips: [pattern(8, 8, "five", "样式 5"), pattern(16, 8, "bars", "样式 4"), pattern(24, 24, "long", "样式 4")] },
  {
    h: "h-[52px]",
    strip: "bg-[#2b3942]",
    clips: [
      auto(8, 8, "orange", "eqDown", "Param. EQ 2..7 - 频段 7 频率"),
      ...every(16, 4, 8, 0.25).map(([at, len]) => auto(at, len, "rose", "tick")),
      ...audio("mint", "full", [[41, 0.5]]),
    ],
  },
  {
    h: "h-[62px]",
    strip: "bg-[#2b3942]",
    clips: [
      auto(17, 1, "olive", "step"),
      auto(25, 1, "olive", "peak"),
      auto(32, 0.5, "magenta", "rise"),
      auto(32.5, 0.5, "lime", "riseTall"),
      auto(33, 0.5, "blue", "riseTall"),
      auto(33.5, 0.5, "olive", "cliff"),
      auto(40, 1, "olive", "fall"),
    ],
  },
  { h: "h-14", strip: "bg-[#2b3942]", clips: every(16, 4, 8, 1).map(([at, len], i) => auto(at, len, "rose", i % 2 ? "jump" : "ess")) },
  { h: "h-14", strip: "bg-[#2b3942]", clips: [auto(32, 1.25, "olive", "dip"), auto(40, 1, "violet", "fall")] },
  { h: "h-14", strip: "bg-[#2b3942]", clips: [auto(40, 2, "magenta", "vee", "S..3")] },
  { h: "h-14", strip: "bg-[#2b3942]", clips: [] },
];

/* ---------- playlist ---------- */

function Minimap() {
  return (
    <div className="flex h-[19px] bg-[#303b44]">
      <button aria-label="向左" className="w-5 border border-[#5b666b] bg-[#3f4b50] text-[#1d2529]"><ChevronLeft className="size-4" /></button>
      <div className="relative w-[887px] border border-[#63767d] bg-[#4a5d66]">
        <svg viewBox="0 0 887 18" className="absolute inset-0 size-full" preserveAspectRatio="none">
          <path d="M0 5h96M96 2h10M130 6h55" stroke="#7a688f" strokeWidth="2" />
          <path d="M95 9h95" stroke="#7fa08c" />
          <path d="M95 12h95" stroke="#a58a6d" />
          <path d="M190 9h383" stroke="#6e8582" strokeWidth="7" />
          <path d="M190 1h14M214 3h22M262 3h16M310 3h22M357 3h12M405 3h22M452 3h22M500 3h20M548 3h25" stroke="#717987" strokeWidth="3" />
          <path d="M190 16h12M238 16h12M286 16h12M334 16h12M382 16h12M430 16h12M525 16h12" stroke="#7d6a82" strokeWidth="2" />
          <path d="M382 15h14M478 15h10M478 17h22" stroke="#b14a9c" strokeWidth="2" />
          <path d="M202 14h10M298 14h10M390 14h10" stroke="#6b9a58" strokeWidth="2" />
        </svg>
        <i className="absolute inset-y-0 left-[227px] w-0.5 bg-[#c9ef5d]" />
      </div>
      <div className="flex-1" />
      <button aria-label="向右" className="w-5 border border-[#5b666b] bg-[#4a5559] text-[#1d2529]"><ChevronRight className="size-4" /></button>
      <button aria-label="缩放" className="flex w-5 items-center justify-center border border-[#5b666b] bg-[#4a5559]"><i className="size-1 bg-[#1a2125]" /></button>
    </div>
  );
}

function Ruler() {
  return (
    <div className="relative h-[21px] overflow-hidden border-b border-[#10181d] bg-[#1c2a31]">
      <div className="absolute inset-y-0 left-0 w-[1040px] border-y border-[#b87474] bg-[#a45759]" />
      <div className="absolute inset-0 flex">
        {Array.from({ length: 19 }, (_, i) => (
          <span key={i} className={`w-[74px] shrink-0 pl-0.5 leading-[22px] ${i % 4 === 0 ? "text-xs" : "text-[10px]"} ${i < 14 ? "text-[#e6bcbc]" : "text-[#8b989e]"}`}>
            {i + 1}
          </span>
        ))}
      </div>
      <svg viewBox="0 0 16 12" className="absolute left-[346px] top-0.5 h-3 w-4"><path d="M1 1h14v3l-7 7-7-7z" fill="#b6ec4e" stroke="#2c3a10" /></svg>
    </div>
  );
}

function Playlist() {
  return (
    <div className="flex min-w-0 flex-1 flex-col pl-[5px]">
      <div className="flex">
        <div className="flex h-10 w-[111px] shrink-0 flex-col justify-around rounded-tl-2xl border border-b-0 border-[#20292e] bg-[#545d62] pl-6 text-[9px] text-[#7d878b]">
          <div className="flex justify-around pl-2">
            <Glyph name="wave" className="size-4" />
            <Glyph name="auto" className="size-4" />
            <Glyph name="piano" className="size-4 text-white" />
          </div>
          <div className="flex justify-around pl-2"><span>音符</span><span>通道</span><span className="text-white">样式</span></div>
        </div>
        <div className="min-w-0 flex-1">
          <Minimap />
          <div className="flex">
            <div className="min-w-0 flex-1"><Ruler /></div>
            <div className="flex w-5 items-center justify-center bg-[#4a5559] text-[#20292d]"><ChevronUp className="size-3" /></div>
          </div>
        </div>
      </div>
      <div className="flex min-h-0 flex-1">
        <div className="relative min-w-0 flex-1 overflow-hidden">
          <div className="absolute inset-y-0 left-[111px] right-0 bg-[linear-gradient(90deg,#434853_0_296px,#3b454a_296px_592px,#444853_592px_888px,#3c454c_888px_1036px,#283c4a_1036px_1184px,#2c434a_1184px)]" />
          <div className="absolute inset-y-0 left-[111px] right-0 bg-[repeating-linear-gradient(90deg,#1e2830_0_1px,transparent_1px_18px,#2f3a43_18px_19px,transparent_19px_37px,#2f3a43_37px_38px,transparent_38px_55px,#2f3a43_55px_56px,transparent_56px_74px)]" />
          {rows.map((row, i) => (
            <div key={i} className={`flex ${row.h}`}>
              <div className={`relative flex w-[105px] shrink-0 flex-col justify-between rounded-r-md border-b border-[#1f2a2e] bg-[linear-gradient(#4a525a,#4a5351_40%,#475151_70%,#414c50)] px-0.5 ${i === 14 ? "text-[#6b7478]" : "text-[#ccd3d6]"}`}>
                <span className="text-[13px] leading-4">Track {i + 1}</span>
                {i < 14 && (
                  <div className="flex items-center justify-between pb-1 pl-2.5 pr-1 text-[10px] leading-3 text-[#2b3438]">
                    ...
                    <button aria-label={`Track ${i + 1} 开关`} className="size-[7px] rounded-full bg-[#b5ea52] outline outline-offset-1 outline-[#6c9136]" />
                  </div>
                )}
              </div>
              <div className="w-1.5 shrink-0 bg-[#212c33] py-px pl-0.5 pr-px"><div className={`h-full ${row.strip}`} /></div>
              <div className="relative flex-1 border-b border-[#161f26]">
                {row.clips.map((c) => (
                  <ClipView key={`${c.at}-${c.tone}`} clip={c} tall={i === 2} />
                ))}
              </div>
            </div>
          ))}
          <div className="absolute inset-y-0 left-[451px] w-[15px] border-r-2 border-[#b4ec58] bg-[linear-gradient(90deg,transparent,#6b9e2c)] opacity-80" />
        </div>
        <div className="relative w-5 border-l border-[#1f2a2e] bg-[#384448]">
          <div className="h-8 border border-[#626d70] bg-[#4c5759]" />
          <i className="absolute right-0 top-[33px] size-2.5 rounded-full bg-[#f3c98a]" />
          <div className="absolute right-0 top-[310px] flex h-[60px] w-2.5 flex-col justify-end rounded-full border border-[#aab2b5] bg-[#2c3639] p-px">
            <div className="h-9 rounded-full bg-[linear-gradient(#e9f5ea,#36c65a_40%)]" />
          </div>
        </div>
      </div>
    </div>
  );
}

function PlaylistWindow() {
  const tools = ["pencil", "brush", "ban", "mute", "slip", "slice", "select"];
  return (
    <main className="flex min-w-0 flex-1 flex-col border-l border-[#1f292e] bg-[#3d4a4b]">
      <div className="flex h-[25px] shrink-0 items-center text-sm text-[#d0d7d9]">
        <Caret className="ml-2.5 mr-2.5" />
        <Glyph name="magnet" className="mr-4 size-4 text-[#7be6a5]" />
        <div className="flex items-center gap-[5px]">
          {tools.map((t) => (
            <button key={t} aria-label={t} className={t === "brush" ? "text-[#62b4ee]" : ""}><Glyph name={t} className="size-4" /></button>
          ))}
          <Search className="size-4" />
          <Glyph name="play" className="size-4" />
        </div>
        <Glyph name="live" className="ml-4 mr-1 size-4 text-[#a8e04c]" />
        <span>播放列表 - Arrangement</span>
        <Caret className="mx-2 text-[#7e898c]" />
        <span>样式 4</span>
        <Caret className="mx-1.5 text-[#7e898c]" />
        <div className="ml-auto flex items-center gap-3 pr-1.5">
          <button aria-label="最小化" className="h-0.5 w-2 bg-current" />
          <button aria-label="还原" className="size-2.5 border border-t-2 border-current" />
          <button aria-label="关闭" className="text-sm leading-4">✕</button>
        </div>
      </div>
      <div className="flex min-h-0 flex-1">
        <Picker />
        <Playlist />
      </div>
    </main>
  );
}

/* ---------- taskbar ---------- */

const SogouMark = ({ className }: { className: string }) => (
  <svg viewBox="0 0 30 30" className={`shrink-0 ${className}`}>
    <path d="M1 5L25 1l4 24L5 29z" fill="#e2562a" />
    <path d="M22 9c-5-3-13-2-13 2 0 5 13 2 13 7 0 4-9 5-14 2" fill="none" stroke="#fff" strokeWidth="3.500" />
  </svg>
);

function ImeBar() {
  return (
    <div className="absolute bottom-12 right-0 flex h-[25px] w-[170px] items-center justify-between bg-white pl-1.5 pr-1 text-[#1670c4]">
      <SogouMark className="absolute -left-8 -top-1 size-8" />
      <span className="text-sm font-bold">英</span>
      <span className="text-sm font-bold">•,</span>
      <Mic className="size-4 fill-current" />
      <svg viewBox="0 0 18 14" className="h-3.5 w-4"><path d="M0 1h18v12H0zM3 4v1h2V4zM7 4v1h2V4zM11 4v1h4V4zM3 7v1h2V7zM7 7v1h2V7zM11 7v1h4V7zM5 10v1h8v-1z" fill="currentColor" fillRule="evenodd" /></svg>
      <svg viewBox="0 0 18 16" className="h-4 w-[18px]"><path d="M5 1c1 2 7 2 8 0l5 3-2 5-2-1v8H4V8L2 9 0 4z" fill="#6a6be8" /></svg>
      <svg viewBox="0 0 16 16" className="size-4"><path d="M1 1h6v6H1zM9 9h6v6H9zM1 9h6v6H1zM12 1a3 3 0 1 0 .1 0z" fill="currentColor" /></svg>
      <svg viewBox="0 0 16 16" className="size-4"><path d="M8 0l2 3h4v3l2 2-2 2v3h-4v3H9V8H7v8H6v-3H2v-3L0 8l2-2V3h4z" fill="currentColor" /></svg>
    </div>
  );
}

const apps = [
  { name: "开始", mark: "", art: <path d="M0 0h11v11H0zM12 0h12v11H12zM0 12h11v12H0zM12 12h12v12H12z" fill="#1a8fe3" /> },
  { name: "文件资源管理器", mark: "w-1.5 bg-[#85888c]", art: <><path d="M0 1h9l3 3h12v18H0z" fill="#fbc846" /><path d="M0 1h9l1 4H0z" fill="#d9971c" /><path d="M4 23v-7h16v7z" fill="#1c74c0" /></> },
  { name: "360浏览器", mark: "", art: <><circle cx="12" cy="12" r="10" fill="#5fc23b" /><path d="M17 15c-3 4-10 3-10-3s9-7 10 0H8" fill="none" stroke="#fff" strokeWidth="3" /><path d="M1 22C-2 12 12-1 22 1" fill="none" stroke="#8bd168" strokeWidth="2" /></> },
  { name: "迅雷", mark: "w-4 bg-[#a8abaf]", art: <><rect width="24" height="24" rx="3" fill="#3f82f3" /><path d="M3 3l9 5 7-4-1 4 4 2-4 2c-1 5-4 8-10 9l3-4c-5-1-5-4-4-6-3-2-4-4-4-8z" fill="#fff" /></> },
  { name: "FL Studio", mark: "w-4 bg-[#1f6fb5]", art: <><circle cx="12" cy="12" r="12" fill="#33373a" /><path d="M6 12c0-4 9-6 12-2 1 5-5 10-8 13-3-2-4-7-4-11z" fill="#f58a2c" /><path d="M5 8l5-2 1-4 3 4 5-1-3 5-5-1-3 3z" fill="#67b53a" /></> },
  { name: "录屏", mark: "w-1.5 bg-[#85888c]", art: <><circle cx="12" cy="12" r="11" fill="#0a0a0a" stroke="#666" /><circle cx="12" cy="12" r="6" fill="#f02d22" /></> },
];

function Taskbar() {
  return (
    <footer className="flex h-12 shrink-0 items-center justify-between border-t border-[#b9bec4] bg-[linear-gradient(90deg,#eff3f9_57%,#dcf5fc_62%_66%,#eff2f8_72%)] text-[#1c1e21]">
      <div className="flex gap-1 pl-3">
        {apps.map((a) => (
          <button key={a.name} aria-label={a.name} className={`flex h-10 w-10 flex-col items-center gap-1 rounded pt-2 ${a.name === "FL Studio" ? "bg-white/80" : ""}`}>
            <svg viewBox="0 0 24 24" className="size-6">{a.art}</svg>
            <span className={`h-[3px] rounded-full ${a.mark}`} />
          </button>
        ))}
      </div>
      <div className="flex items-center gap-4 pb-1 pr-[18px]">
        <ChevronUp className="size-4" />
        <svg viewBox="0 0 18 18" className="size-[18px]"><path d="M1 7c2-7 13-7 15-1M16 1v5h-5M1 17v-5h5M1 12l4 4" fill="none" stroke="#222" strokeWidth="1.500" /><circle cx="13" cy="13" r="4" fill="#f0952a" /></svg>
        <svg viewBox="0 0 18 18" className="size-4"><circle cx="9" cy="9" r="8" fill="#f5d90a" stroke="#3da345" strokeWidth="1.500" /><path d="M9 5v8M5 9h8" stroke="#1c6d2a" strokeWidth="2.500" /></svg>
        <svg viewBox="0 0 20 16" className="h-4 w-[18px]"><path d="M5 13a4 4 0 0 1 0-7c2-5 9-5 10 0 4 1 4 7 0 7zM2 1l16 14" fill="#aeb1b5" stroke="#1c1e21" strokeWidth="1.500" /></svg>
        <Mic className="size-4 text-[#2a5d9c]" />
        <span className="text-[15px] text-[#7d8084]">英</span>
        <SogouMark className="mx-1 size-4" />
        <div className="flex items-center gap-2">
          <Wifi className="size-4" />
          <Volume2 className="size-4" />
          <svg viewBox="0 0 18 14" className="h-3.5 w-4"><path d="M1 4h14v3h2v3h-2v3H1zM4 0l-3 6h3z" fill="#1c1e21" /></svg>
        </div>
        <div className="flex items-center gap-2 text-right font-['Open_Sans'] text-xs leading-4">
          <div><div>16:09</div><div>2023/6/26</div></div>
          <svg viewBox="0 0 16 16" className="size-4"><path d="M2 12V6c0-6 10-6 11 0v6l2 1H0zM5 14h5v2H5z" fill="#1c1e21" /></svg>
        </div>
      </div>
    </footer>
  );
}

export default function App() {
  return (
    <div className="relative flex h-screen flex-col overflow-hidden bg-[#3d4a4b] font-['Roboto','Noto_Sans_CJK_SC',sans-serif]">
      <TopBars />
      <div className="flex min-h-0 flex-1">
        <Browser />
        <div className="w-2 shrink-0 bg-[#4a525a]" />
        <PlaylistWindow />
      </div>
      <Taskbar />
      <ImeBar />
    </div>
  );
}
